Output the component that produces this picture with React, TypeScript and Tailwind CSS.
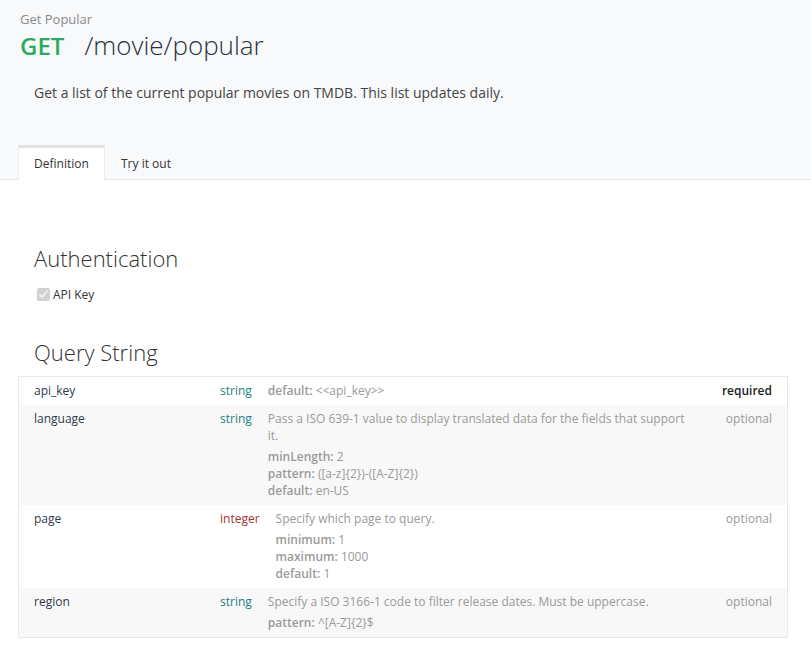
import React from 'react';

type Row = {
  name: string;
  type: 'string' | 'integer';
  desc?: string;
  defaultOnly?: string;
  req: 'required' | 'optional';
  meta?: [string, string][];
  shade: boolean;
};

const rows: Row[] = [
  { name: 'api_key', type: 'string', defaultOnly: '<<api_key>>', req: 'required', shade: false },
  {
    name: 'language',
    type: 'string',
    desc: 'Pass a ISO 639-1 value to display translated data for the fields that support it.',
    req: 'optional',
    meta: [
      ['minLength:', '2'],
      ['pattern:', '([a-z]{2})-([A-Z]{2})'],
      ['default:', 'en-US'],
    ],
    shade: true,
  },
  {
    name: 'page',
    type: 'integer',
    desc: 'Specify which page to query.',
    req: 'optional',
    meta: [
      ['minimum:', '1'],
      ['maximum:', '1000'],
      ['default:', '1'],
    ],
    shade: false,
  },
  {
    name: 'region',
    type: 'string',
    desc: 'Specify a ISO 3166-1 code to filter release dates. Must be uppercase.',
    req: 'optional',
    meta: [['pattern:', '^[A-Z]{2}$']],
    shade: true,
  },
];

const ParamRow = ({ row }: { row: Row }) => (
  <div className={`flex px-[15px] pt-[5px] pb-[6px] text-[12px] leading-[17px] ${row.shade ? 'bg-[#f8f8f8]' : 'bg-white'}`}>
    <div className="w-[186px] shrink-0 text-[#2f3947]">{row.name}</div>
    <div className={`shrink-0 ${row.type === 'integer' ? 'text-[#a3332f]' : 'text-[#1e7f82]'}`}>{row.type}</div>
    <div className="flex-1 pl-4 pr-3 text-[#9a9a9a]">
      {row.defaultOnly ? (
        <div>
          <span className="font-semibold">default:</span> {row.defaultOnly}
        </div>
      ) : (
        <>
          <div>{row.desc}</div>
          {row.meta && (
            <div className="mt-1">
              {row.meta.map(([k, v]) => (
                <div key={k}>
                  <span className="font-semibold">{k}</span> {v}
                </div>
              ))}
            </div>
          )}
        </>
      )}
    </div>
    <div className={`w-[64px] shrink-0 text-right ${row.req === 'required' ? 'text-[#222] font-semibold' : 'text-[#999]'}`}>
      {row.req}
    </div>
  </div>
);

export default function App() {
  return (
    <div className="w-[811px] h-[656px] bg-white font-['Open_Sans',sans-serif] overflow-hidden">
      <div className="bg-[#f8f9fb] border-b border-[#e6e6e6]">
        <div className="px-5 pt-[10px]">
          <p className="text-[13px] leading-[18px] text-[#8a8a8a]">Get Popular</p>
          <h1 className="flex items-baseline leading-[34px]">
            <span className="text-[24px] font-semibold text-[#2eaa5f]">GET</span>
            <span className="ml-[20px] text-[26px] font-light text-[#2a3042]">/movie/popular</span>
          </h1>
          <p className="pl-[14px] mt-[20px] text-[14px] leading-[20px] text-[#444]">
            Get a list of the current popular movies on TMDB. This list updates daily.
          </p>
        </div>
        <div className="flex px-[18px] mt-[42px] text-[12px]">
          <div className="-mb-px w-[87px] h-[35px] flex items-center justify-center bg-white border-t-[3px] border-x border-[#e2e2e2] border-x-[#ececec] text-[#333]">
            Definition
          </div>
          <div className="-mb-px h-[35px] flex items-center px-4 border-t-[3px] border-transparent text-[#333]">
            Try it out
          </div>
        </div>
      </div>

      <div className="px-[34px] pt-[63px]">
        <h2 className="text-[22px] leading-[30px] font-light text-[#333]">Authentication</h2>
        <label className="flex items-center mt-[12px] text-[12px] text-[#333]">
          <input type="checkbox" checked disabled readOnly className="w-[13px] h-[13px] m-[3px]" />
          API Key
        </label>
        <h2 className="mt-[33px] text-[22px] leading-[30px] font-light text-[#333]">Query String</h2>
      </div>

      <div className="mx-[18px] mt-[9px] w-[770px] border border-[#e8e8e8]">
        {rows.map(r => (
          <ParamRow key={r.name} row={r} />
        ))}
      </div>
    </div>
  );
}
